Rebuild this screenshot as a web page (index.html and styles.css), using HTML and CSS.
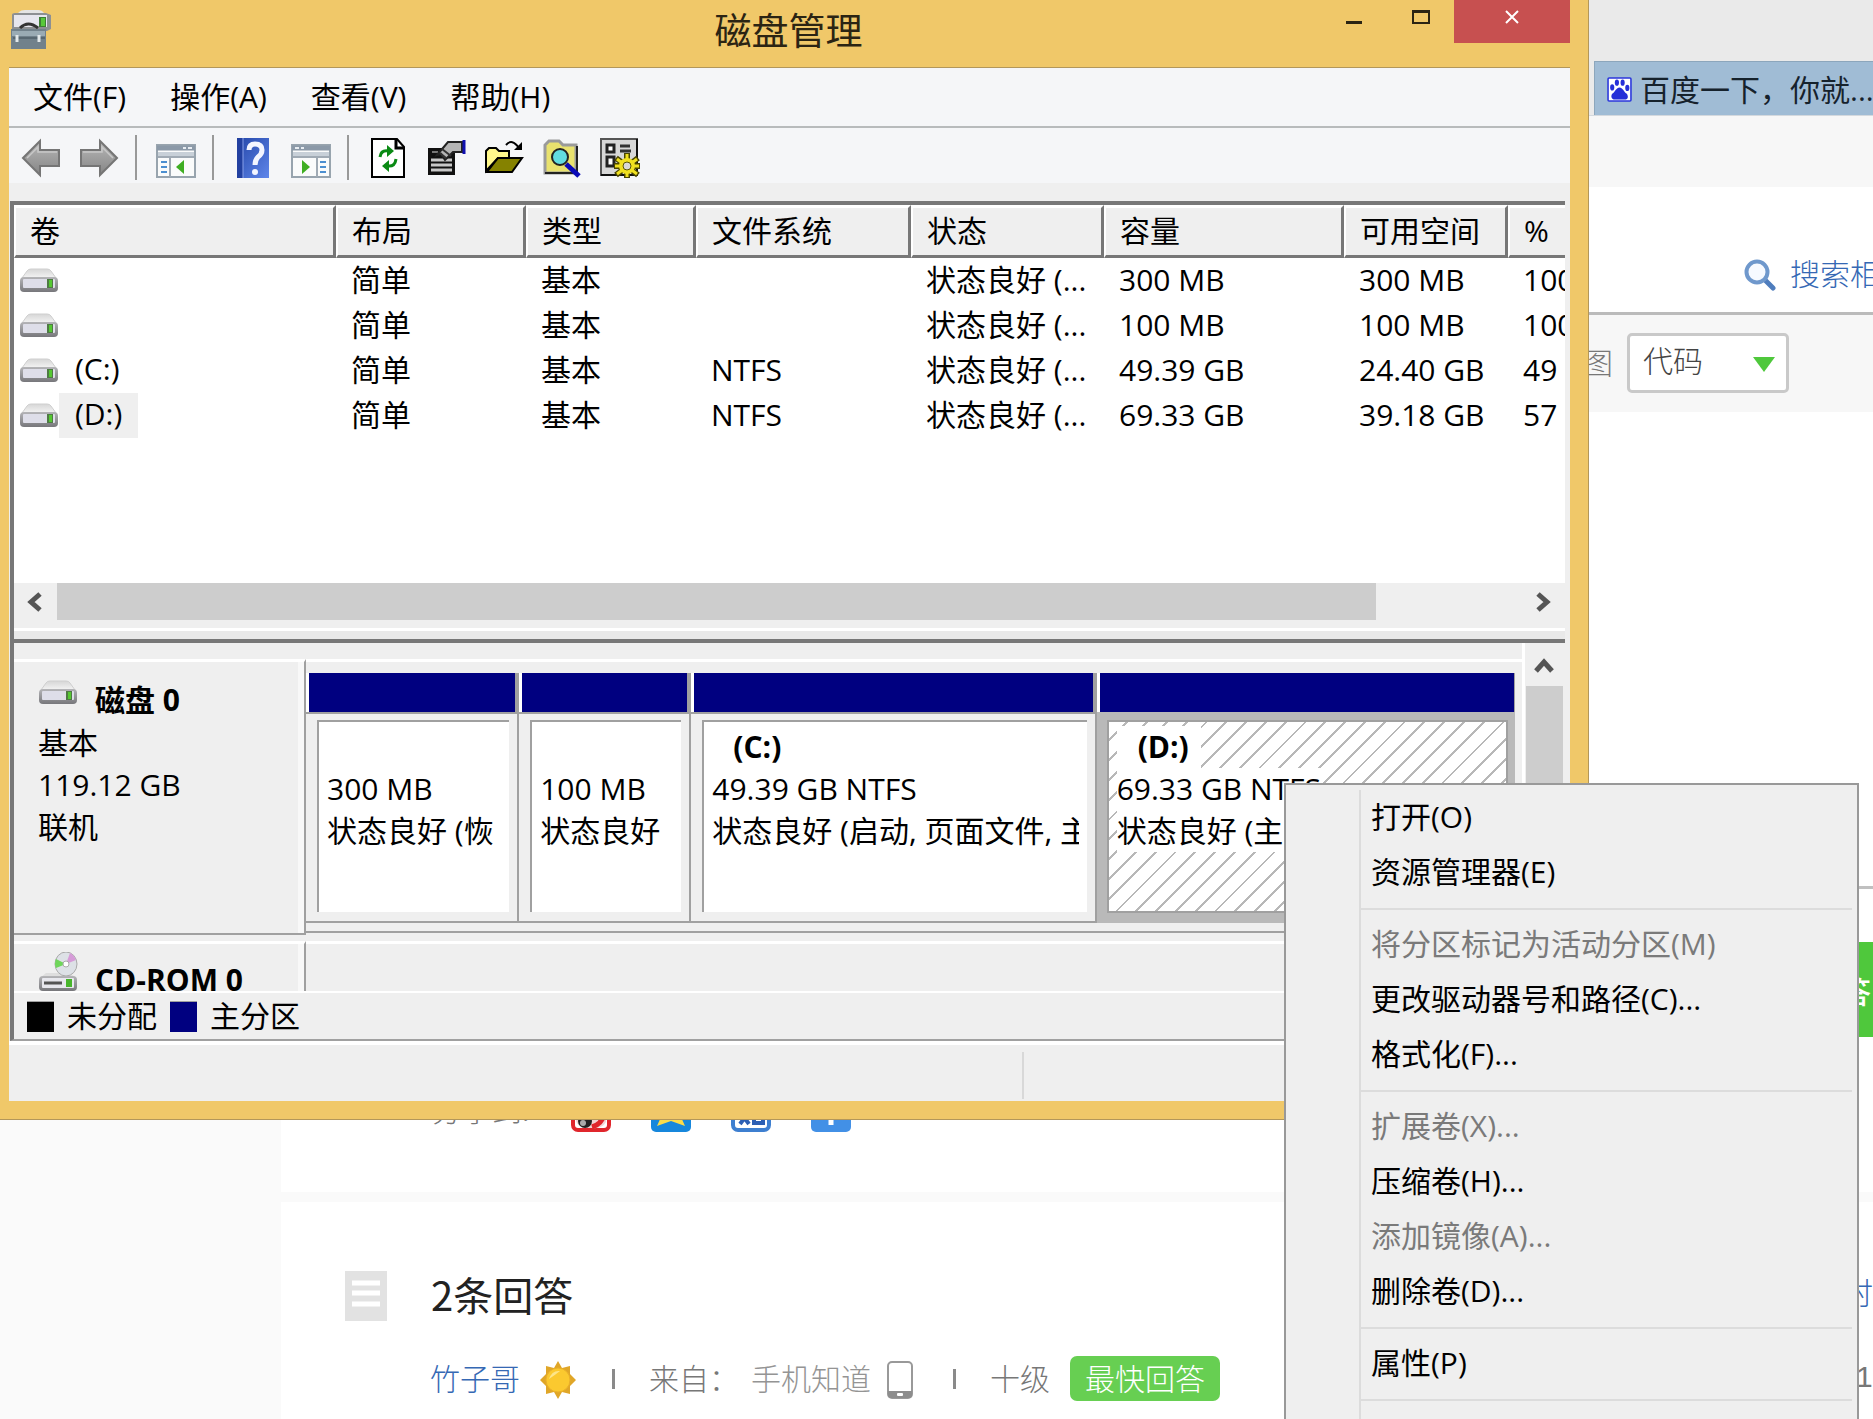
FILE: index.html
```html
<!DOCTYPE html>
<html lang="zh-CN">
<head>
    <meta charset="UTF-8">
    <meta name="viewport" content="width=device-width, initial-scale=1.0">
    <title>磁盘管理</title>
    <link rel="stylesheet" href="styles.css">
</head>
<body>
    <svg class="sprite" aria-hidden="true">
        <defs>
            <linearGradient id="driveTop" x1="0" y1="0" x2="0" y2="1">
                <stop offset="0" stop-color="#d6d6d6"/>
                <stop offset="1" stop-color="#f4f4f4"/>
            </linearGradient>
            <linearGradient id="driveEdge" x1="0" y1="0" x2="0" y2="1">
                <stop offset="0" stop-color="#b5b5b8"/>
                <stop offset="1" stop-color="#77777b"/>
            </linearGradient>
            <linearGradient id="helpBlue" x1="0" y1="0" x2="1" y2="1">
                <stop offset="0" stop-color="#2446a8"/>
                <stop offset="1" stop-color="#5f86ea"/>
            </linearGradient>
            <linearGradient id="arrowGray" x1="0" y1="0" x2="0" y2="1">
                <stop offset="0" stop-color="#b8b8b8"/>
                <stop offset="1" stop-color="#858585"/>
            </linearGradient>
            <symbol id="drive" viewBox="0 0 40 26">
                <path d="M8 3Q9 1 12 1H28Q31 1 32 3L37 10H3Z" fill="url(#driveTop)" stroke="#cfcfcf"/>
                <rect x="1" y="9" width="38" height="15" rx="4" fill="url(#driveEdge)"/>
                <rect x="4" y="11" width="32" height="9" rx="1" fill="#dedee9"/>
                <rect x="28" y="11" width="6" height="9" fill="#4f7a45"/>
                <rect x="30" y="12" width="3" height="7" fill="#55c832"/>
            </symbol>
            <symbol id="pane" viewBox="0 0 40 34">
                <rect x="1" y="1" width="38" height="32" fill="#fafbfb" stroke="#98a4ae" stroke-width="2"/>
                <path d="M1 4H39" stroke="#8b99a8" stroke-width="5"/>
                <path d="M27 4h3M32 4h4" stroke="#e8edf2" stroke-width="2"/>
                <path d="M2 10H38" stroke="#c8d0d8" stroke-width="4"/>
                <path d="M2 13H38M14 13V33" stroke="#a0aab4" stroke-width="2"/>
                <path d="M5 18h6M5 23h6M5 28h6" stroke="#4c8fd0" stroke-width="2"/>
            </symbol>
        </defs>
    </svg>

    <!-- browser page behind the window -->
    <div class="page">
        <div class="browser-top"></div>
        <div class="tab-row">
            <a href="#" class="tab">
                <svg class="paw" viewBox="0 0 24 24" aria-hidden="true">
                    <rect x="1" y="1" width="22" height="22" rx="1" fill="#fff" stroke="#2b36dc" stroke-width="1.5"/>
                    <g fill="#2530d8">
                        <ellipse cx="5" cy="10" rx="2" ry="3"/>
                        <ellipse cx="9.500" cy="5.500" rx="2" ry="3"/>
                        <ellipse cx="15" cy="5.500" rx="2" ry="3"/>
                        <ellipse cx="19.500" cy="10.500" rx="2" ry="3"/>
                        <path d="M12 10C9 10 8 14 5 16C3 19 5 22 8 21.500H16.500C20 22 21 19 19 16C16 14 15 10 12 10Z"/>
                    </g>
                </svg>
                <span>百度一下，你就...</span>
            </a>
        </div>
        <div class="band"></div>
        <div class="search-row">
            <a href="#" class="search-link">
                <svg class="search-icon" viewBox="0 0 32 32" aria-hidden="true">
                    <path d="M21 21L29 29" stroke="#4f7dbd" stroke-width="5" stroke-linecap="round"/>
                    <circle cx="13" cy="13" r="10.500" fill="#f7faff" stroke="#6f98cc" stroke-width="4"/>
                </svg>
                <span>搜索相关</span>
            </a>
        </div>
        <div class="tool-row">
            <label for="codeType">图</label>
            <div class="select-box">
                <select id="codeType">
                    <option>代码</option>
                </select>
            </div>
        </div>
        <div class="main">
            <div class="sidebar"></div>
            <div class="content">
                <div class="question">
                    <div class="rule"></div>
                    <button class="answer-btn" type="button">回答</button>
                    <div class="share">
                        <span>分享到:</span>
                        <svg viewBox="0 0 40 40" aria-hidden="true">
                            <rect x="2" y="2" width="36" height="36" rx="5" fill="#fff" stroke="#e0262c" stroke-width="4"/>
                            <path d="M5 20h30v10q-4 7-14 6Q6 36 5 28Z" fill="#f2d5d5"/>
                            <circle cx="14" cy="29" r="7" fill="#222"/>
                            <circle cx="12" cy="31" r="3" fill="#aaa"/>
                            <path d="M33 22Q31 32 21 35" fill="none" stroke="#e0262c" stroke-width="5"/>
                        </svg>
                        <svg viewBox="0 0 40 40" aria-hidden="true">
                            <rect width="40" height="40" rx="5" fill="#1687dc"/>
                            <path d="M20 4L25 15L36 16L30 25L34 34L20 29L6 34L10 25L4 16L15 15Z" fill="#fbdc4a"/>
                        </svg>
                        <svg viewBox="0 0 40 40" aria-hidden="true">
                            <rect x="2" y="2" width="36" height="36" rx="5" fill="#fff" stroke="#3e7fd0" stroke-width="4"/>
                            <path d="M9 20L18 32M18 20L9 32M23 18V31H32V24H23" fill="none" stroke="#2c5fb4" stroke-width="4"/>
                        </svg>
                        <svg viewBox="0 0 40 40" aria-hidden="true">
                            <rect width="40" height="40" rx="5" fill="#4290e6"/>
                            <path d="M20 8V33M10 18H30" stroke="#fff" stroke-width="5"/>
                        </svg>
                    </div>
                </div>
                <div class="answers">
                    <div class="answers-head">
                        <svg class="doc-icon" viewBox="0 0 42 50" aria-hidden="true">
                            <rect width="42" height="50" fill="#e2e2e2"/>
                            <path d="M7 12H35M7 22H35M7 33H35" stroke="#fff" stroke-width="5"/>
                        </svg>
                        <h2>2条回答</h2>
                        <a href="#" class="edge sort">时间</a>
                    </div>
                    <div class="answer-meta">
                        <a href="#" class="user">竹子哥</a>
                        <svg class="sun" viewBox="0 0 36 38" aria-hidden="true">
                            <path d="M18 0L22 7L30 5L30 13L36 19L30 25L30 33L22 31L18 38L14 31L6 33L6 25L0 19L6 13L6 5L14 7Z" fill="#e0a628"/>
                            <circle cx="18" cy="19" r="12" fill="#fbc92f" stroke="#eab02a"/>
                            <path d="M9 18Q12 9 20 10Q15 14 9 18Z" fill="#fde58a"/>
                        </svg>
                        <span class="bar"></span>
                        <span class="from">来自：</span>
                        <span class="source">手机知道</span>
                        <svg class="phone" viewBox="0 0 26 38" aria-hidden="true">
                            <rect x="1" y="1" width="24" height="36" rx="4" fill="#fff" stroke="#999" stroke-width="2"/>
                            <path d="M1 30H25V34Q25 37 22 37H4Q1 37 1 34Z" fill="#8d8d8d"/>
                            <rect x="10" y="32" width="6" height="3" rx="1" fill="#fff"/>
                        </svg>
                        <span class="bar"></span>
                        <span class="level">十级</span>
                        <span class="badge">最快回答</span>
                        <span class="edge date">1</span>
                    </div>
                </div>
            </div>
        </div>
    </div>

    <!-- disk management window -->
    <div class="window">
        <div class="titlebar">
            <svg class="app-icon" viewBox="0 0 40 40" aria-hidden="true">
                <path d="M8 3Q10 1 14 1H27Q31 1 33 4L37 8H4Z" fill="#e4e4e4"/>
                <path d="M1 6Q1 4 4 4H35L40 6V20L36 22H1Z" fill="#8d9093"/>
                <rect x="3" y="6" width="33" height="12" fill="#e6e6ee"/>
                <rect x="28" y="8" width="7" height="10" fill="#3e7d35"/>
                <rect x="30" y="9" width="4" height="8" fill="#58c83a"/>
                <path d="M9 19Q17 11 27 19" fill="none" stroke="#333" stroke-width="3"/>
                <path d="M0 20H35V40H0Z" fill="#71818b"/>
                <path d="M1 22H34V27H1Z" fill="#9aabb4"/>
                <path d="M2 29H34" stroke="#586872" stroke-width="2"/>
                <path d="M6 26V33M28 26V33" stroke="#e2e8ea" stroke-width="3"/>
            </svg>
            <h1>磁盘管理</h1>
            <div class="controls">
                <button type="button" aria-label="最小化">
                    <svg viewBox="0 0 18 14"><path d="M1 12.500H17" stroke="#2b2413" stroke-width="3"/></svg>
                </button>
                <button type="button" aria-label="最大化">
                    <svg viewBox="0 0 18 14"><path d="M1 1H17V13H1Z" fill="none" stroke="#2b2413" stroke-width="2"/><path d="M0 1.500H18" stroke="#2b2413" stroke-width="3"/></svg>
                </button>
                <button type="button" class="close" aria-label="关闭">
                    <svg viewBox="0 0 18 14"><path d="M3 1L15 13M15 1L3 13" stroke="#fff" stroke-width="2"/></svg>
                </button>
            </div>
        </div>

        <div class="client">
            <div class="menubar">
                <button type="button">文件(F)</button>
                <button type="button">操作(A)</button>
                <button type="button">查看(V)</button>
                <button type="button">帮助(H)</button>
            </div>

            <div class="toolbar">
                <button type="button" aria-label="后退">
                    <svg viewBox="0 0 40 40"><path d="M2 20L19 3V12H38V28H19V37Z" fill="url(#arrowGray)" stroke="#757575" stroke-width="2"/><path d="M6 20L17 9V14H36" fill="none" stroke="#c8c8c8" stroke-width="1.500"/></svg>
                </button>
                <button type="button" aria-label="前进">
                    <svg viewBox="0 0 40 40"><path d="M38 20L21 3V12H2V28H21V37Z" fill="url(#arrowGray)" stroke="#757575" stroke-width="2"/><path d="M4 14H23V9L34 20" fill="none" stroke="#c8c8c8" stroke-width="1.500"/></svg>
                </button>
                <span class="sep"></span>
                <button type="button" aria-label="显示/隐藏控制台树">
                    <svg viewBox="0 0 40 40"><use href="#pane" y="6" width="40" height="34"/><path d="M28 22V36L20 29Z" fill="#3fae22"/></svg>
                </button>
                <span class="sep"></span>
                <button type="button" aria-label="帮助">
                    <svg viewBox="0 0 40 40"><rect x="4" width="32" height="40" fill="url(#helpBlue)"/><path d="M4 0H10V40H4Z" fill="#2240a0"/><path d="M10 0V40" stroke="#88a0ea"/><path d="M16 12Q16 6 22 6Q29 6 29 12Q29 16 25 19Q22 22 22 27" fill="none" stroke="#f3f5ff" stroke-width="5"/><circle cx="22" cy="34" r="3" fill="#f3f5ff"/></svg>
                </button>
                <button type="button" aria-label="显示/隐藏操作窗格">
                    <svg viewBox="0 0 40 40"><use href="#pane" y="6" width="40" height="34" transform="matrix(-1 0 0 1 40 0)"/><path d="M11 22V36L19 29Z" fill="#3fae22"/></svg>
                </button>
                <span class="sep"></span>
                <button type="button" aria-label="刷新">
                    <svg viewBox="0 0 40 40"><path d="M4 1H29L36 9V39H4Z" fill="#fff" stroke="#000" stroke-width="2"/><path d="M28 1V10H36" fill="none" stroke="#000" stroke-width="3"/><path d="M12 19Q13 12 20 13M28 21Q27 29 20 28" fill="none" stroke="#0a8a14" stroke-width="3"/><path d="M19 7L26 13L19 19ZM21 22L14 28L21 34Z" fill="#0a8a14"/></svg>
                </button>
                <button type="button" aria-label="属性">
                    <svg viewBox="0 0 40 40"><path d="M2 10H29V37H2Z" fill="#111"/><path d="M5 22H26M5 27H26M5 32H26" stroke="#c8c8c8" stroke-width="3"/><path d="M6 14H12" stroke="#777" stroke-width="2"/><path d="M11 17L22 4H36V14H27L19 22L15 16Z" fill="#b5b5b5" stroke="#222" stroke-width="2"/><path d="M16 11L25 18M14 15L20 20" stroke="#333" stroke-width="2"/><path d="M38 2V16" stroke="#1010b0" stroke-width="3"/></svg>
                </button>
                <button type="button" aria-label="打开">
                    <svg viewBox="0 0 40 40"><path d="M2 33V13L5 10H12L15 13H25V20H14Z" fill="#fff88c" stroke="#000" stroke-width="2"/><path d="M3 34L14 20H38L28 34Z" fill="#858200" stroke="#000" stroke-width="2"/><path d="M22 7Q28 0 35 10" fill="none" stroke="#000" stroke-width="2"/><path d="M38 4V12H30Z" fill="#000"/></svg>
                </button>
                <button type="button" aria-label="查找">
                    <svg viewBox="0 0 40 40"><path d="M3 35V7L7 3H17L21 7H34V35Z" fill="#e9e26e" stroke="#9a9a9a" stroke-width="3"/><path d="M3 35H35V8" fill="none" stroke="#222" stroke-width="2"/><path d="M24 26L37 38" stroke="#0a0ab8" stroke-width="5"/><circle cx="18" cy="19" r="8" fill="#62dce0" stroke="#222" stroke-width="2"/></svg>
                </button>
                <button type="button" aria-label="设置">
                    <svg viewBox="0 0 40 40"><path d="M1 1H37V37H1Z" fill="#d8d8d8" stroke="#555" stroke-width="2"/><path d="M37 1V37H1" fill="none" stroke="#111" stroke-width="2"/><path d="M7 7H14V14H7ZM7 19H14V28H7Z" fill="#fff" stroke="#222" stroke-width="3"/><path d="M20 8H30M20 13H31" stroke="#333" stroke-width="3"/><path d="M27 15V40M16 20L38 37M38 20L16 37M14 28H40" stroke="#4a4600" stroke-width="6"/><path d="M27 16V39M17 21L37 36M37 21L17 36M15 28H39" stroke="#f0e020" stroke-width="3"/><circle cx="27" cy="28" r="8" fill="#f0e020"/><circle cx="27" cy="28" r="4" fill="#d8d8d8" stroke="#5a5600"/></svg>
                </button>
            </div>

            <div class="panes">
                <div class="volume-list">
                    <table>
                        <colgroup>
                            <col class="c-volume"><col class="c-layout"><col class="c-type"><col class="c-fs">
                            <col class="c-status"><col class="c-size"><col class="c-free"><col>
                        </colgroup>
                        <thead>
                            <tr><th>卷</th><th>布局</th><th>类型</th><th>文件系统</th><th>状态</th><th>容量</th><th>可用空间</th><th>%</th></tr>
                        </thead>
                        <tbody>
                            <tr><td><svg class="drive"><use href="#drive"/></svg></td><td>简单</td><td>基本</td><td></td><td>状态良好 (...</td><td>300 MB</td><td>300 MB</td><td>100 %</td></tr>
                            <tr><td><svg class="drive"><use href="#drive"/></svg></td><td>简单</td><td>基本</td><td></td><td>状态良好 (...</td><td>100 MB</td><td>100 MB</td><td>100 %</td></tr>
                            <tr><td><svg class="drive"><use href="#drive"/></svg><span class="name">(C:)</span></td><td>简单</td><td>基本</td><td>NTFS</td><td>状态良好 (...</td><td>49.39 GB</td><td>24.40 GB</td><td>49 %</td></tr>
                            <tr><td><svg class="drive"><use href="#drive"/></svg><span class="name selected">(D:)</span></td><td>简单</td><td>基本</td><td>NTFS</td><td>状态良好 (...</td><td>69.33 GB</td><td>39.18 GB</td><td>57 %</td></tr>
                        </tbody>
                    </table>
                </div>
                <div class="hscroll">
                    <button type="button" aria-label="向左滚动"><svg viewBox="0 0 18 20"><path d="M14 2L5 10L14 18" fill="none" stroke="#555" stroke-width="5"/></svg></button>
                    <div class="track"><div class="thumb"></div></div>
                    <button type="button" aria-label="向右滚动"><svg viewBox="0 0 18 20"><path d="M4 2L13 10L4 18" fill="none" stroke="#555" stroke-width="5"/></svg></button>
                </div>
                <div class="splitter"></div>

                <div class="disk-view">
                    <div class="disks">
                        <div class="disk">
                            <div class="disk-label">
                                <div class="disk-name"><svg class="drive"><use href="#drive"/></svg><b>磁盘 0</b></div>
                                <p>基本</p>
                                <p>119.12 GB</p>
                                <p>联机</p>
                            </div>
                            <div class="partitions">
                                <div class="part">
                                    <div class="part-bar"></div>
                                    <div class="part-body"><div class="part-info"><b></b><span>300 MB</span><span>状态良好 (恢</span></div></div>
                                </div>
                                <div class="part">
                                    <div class="part-bar"></div>
                                    <div class="part-body"><div class="part-info"><b></b><span>100 MB</span><span>状态良好</span></div></div>
                                </div>
                                <div class="part">
                                    <div class="part-bar"></div>
                                    <div class="part-body"><div class="part-info"><b>(C:)</b><span>49.39 GB NTFS</span><span>状态良好 (启动, 页面文件, 主</span></div></div>
                                </div>
                                <div class="part active">
                                    <div class="part-bar"></div>
                                    <div class="part-body"><div class="part-info"><b>(D:)</b><span>69.33 GB NTFS</span><span>状态良好 (主分区)</span></div></div>
                                </div>
                            </div>
                        </div>
                        <div class="disk cdrom">
                            <div class="disk-label">
                                <div class="disk-name">
                                    <svg class="cd" viewBox="0 0 40 40" aria-hidden="true">
                                        <path d="M8 21H32L38 26H2Z" fill="#dedede"/>
                                        <ellipse cx="28" cy="12" rx="11" ry="12" fill="#dde1e6" stroke="#a9a9a9"/>
                                        <path d="M28 12L32 1Q36 3 38 8Z" fill="#d69bd8"/>
                                        <path d="M28 12L18 7Q16 12 18 16Z" fill="#6fd65a"/>
                                        <circle cx="28" cy="12" r="3" fill="#fff" stroke="#aaa"/>
                                        <rect x="1" y="24" width="38" height="15" rx="4" fill="url(#driveEdge)"/>
                                        <rect x="4" y="26" width="32" height="10" rx="1" fill="#e8e8ee"/>
                                        <path d="M6 31H24" stroke="#555" stroke-width="3"/>
                                        <rect x="28" y="27" width="6" height="8" fill="#48b52c"/>
                                    </svg>
                                    <b>CD-ROM 0</b>
                                </div>
                            </div>
                            <div class="partitions"></div>
                        </div>
                    </div>
                    <div class="vscroll">
                        <button type="button" aria-label="向上滚动"><svg viewBox="0 0 20 18"><path d="M2 15L10 6L18 15" fill="none" stroke="#555" stroke-width="5"/></svg></button>
                        <div class="vthumb"></div>
                    </div>
                </div>
                <div class="legend">
                    <span class="swatch unallocated"></span><span>未分配</span>
                    <span class="swatch primary"></span><span>主分区</span>
                </div>
            </div>
            <div class="statusbar"><span class="status-main"></span></div>
        </div>
    </div>

    <!-- partition context menu -->
    <div class="context-menu">
        <div class="menu-items">
            <button type="button">打开(O)</button>
            <button type="button">资源管理器(E)</button>
            <hr>
            <button type="button" disabled>将分区标记为活动分区(M)</button>
            <button type="button">更改驱动器号和路径(C)...</button>
            <button type="button">格式化(F)...</button>
            <hr>
            <button type="button" disabled>扩展卷(X)...</button>
            <button type="button">压缩卷(H)...</button>
            <button type="button" disabled>添加镜像(A)...</button>
            <button type="button">删除卷(D)...</button>
            <hr>
            <button type="button">属性(P)</button>
            <hr>
        </div>
    </div>
</body>
</html>
```
FILE: styles.css
```css
:root {
    --frame: #f0c869;
    --face: #efefef;
    --shadow: #a0a0a0;
    --dark: #777777;
    --navy: #000080;
    --link: #3568b4;
    --green: #4fc83c;
}

* {
    box-sizing: border-box;
}

body {
    position: relative;
    margin: 0;
    height: 100vh;
    overflow: hidden;
    background: #fff;
    color: #000;
    font-family: "Open Sans", "Noto Sans CJK SC", sans-serif;
    font-size: 30px;
    line-height: 42px;
}

button,
select {
    margin: 0;
    padding: 0;
    border: none;
    background: none;
    color: inherit;
    font: inherit;
}

a {
    color: var(--link);
    text-decoration: none;
}

p,
h1,
h2 {
    margin: 0;
    font-weight: normal;
}

svg {
    display: block;
    flex: none;
}

.sprite {
    position: absolute;
    width: 0;
    height: 0;
}

/* browser page */
.page {
    display: flex;
    flex-direction: column;
    min-height: 100%;
    font-family: "Noto Sans CJK SC", sans-serif;
    font-weight: 300;
}

.browser-top {
    height: 61px;
    background: #eaeaea;
}

.tab-row {
    display: flex;
    justify-content: flex-end;
    height: 55px;
    background: #eaeaea;
    border-bottom: 1px solid #d4d9de;
}

.tab {
    display: flex;
    align-items: center;
    gap: 8px;
    width: 279px;
    padding-left: 12px;
    padding-top: 2px;
    border: 1px solid #8ca6bc;
    border-width: 1px 0 0 1px;
    background: #a0bcd5;
    color: #16222c;
    font-family: "Open Sans", "Noto Sans CJK SC", sans-serif;
    font-weight: normal;
    white-space: nowrap;
}

.paw {
    width: 25px;
    height: 25px;
}

.band {
    height: 71px;
    background: #f7f7f7;
}

.search-row {
    display: flex;
    justify-content: flex-end;
    height: 128px;
    padding-top: 64px;
    border-bottom: 3px solid #bbb;
}

.search-link {
    display: flex;
    gap: 14px;
    width: 129px;
    white-space: nowrap;
}

.search-icon {
    width: 32px;
    height: 32px;
    margin-top: 8px;
}

.tool-row {
    display: flex;
    justify-content: flex-end;
    align-items: center;
    gap: 14px;
    height: 97px;
    padding: 0 84px 2px 0;
    background: #f7f7f7;
    color: #777;
}

.tool-row label {
    padding-bottom: 4px;
}

.select-box {
    position: relative;
    width: 162px;
}

.select-box select {
    appearance: none;
    width: 100%;
    height: 60px;
    padding: 0 13px 8px;
    border: 3px solid #c9c9c9;
    border-radius: 5px;
    background: #fff;
    color: #444;
}

.select-box::after {
    content: "";
    position: absolute;
    top: 24px;
    right: 14px;
    border: 11px solid transparent;
    border-top: 15px solid var(--green);
    border-bottom: none;
}

.main {
    display: flex;
    flex: 1;
}

.sidebar {
    width: 281px;
    background: #fafafa;
}

.content {
    display: flex;
    flex-direction: column;
    flex: 1;
    gap: 10px;
    min-width: 0;
    background: #fafafa;
}

.question {
    display: flex;
    flex-direction: column;
    align-items: flex-end;
    height: 780px;
    padding: 474px 0 60px;
    background: #fff;
}

.rule {
    width: 100%;
    height: 3px;
    background: #c0c0c0;
}

.answer-btn {
    width: 90px;
    height: 95px;
    margin-top: 53px;
    padding-left: 28px;
    overflow: hidden;
    background: var(--green);
    color: #fff;
    font-weight: 500;
    text-align: left;
    white-space: nowrap;
}

.share {
    display: flex;
    align-self: stretch;
    gap: 40px;
    height: 40px;
    margin-top: auto;
    padding-left: 151px;
    color: #777;
}

.share span {
    width: 99px;
    line-height: 32px;
}

.share svg {
    width: 40px;
    height: 40px;
}

.answers {
    flex: 1;
    padding: 68px 0 0 64px;
    background: #fff;
}

.answers-head {
    display: flex;
    gap: 44px;
    height: 52px;
}

.answers-head h2 {
    color: #222;
    font-size: 40px;
    line-height: 48px;
}

.doc-icon {
    width: 42px;
    height: 50px;
    margin-top: 1px;
}

.edge {
    margin-left: auto;
    overflow: hidden;
    white-space: nowrap;
}

.sort {
    width: 30px;
}

.date {
    width: 17px;
    font-family: "Liberation Sans", sans-serif;
}

.answer-meta {
    display: flex;
    height: 46px;
    margin-top: 34px;
    padding-left: 85px;
    color: #777;
}

.sun {
    width: 36px;
    height: 38px;
    margin: 5px 0 0 20px;
}

.bar {
    width: 3px;
    height: 20px;
    margin: 13px 34px 0 36px;
    background: #8a8a8a;
}

.from {
    margin-right: 12px;
}

.source {
    color: #949494;
}

.phone {
    width: 26px;
    height: 38px;
    margin: 5px 0 0 16px;
}

.phone + .bar {
    margin-left: 40px;
}

.badge {
    height: 45px;
    margin-left: 20px;
    padding: 0 15px;
    border-radius: 7px;
    background: #67cf52;
    color: #fff;
}

/* window frame */
.window {
    position: absolute;
    top: 0;
    left: 0;
    right: 284px;
    padding: 0 18px 18px 9px;
    background: var(--frame);
    border-right: 1px solid #b3975a;
    border-bottom: 1px solid #b3975a;
}

.titlebar {
    display: flex;
    justify-content: space-between;
    height: 67px;
}

.titlebar h1 {
    flex: 1;
    padding-left: 206px;
    color: #2b2413;
    font-size: 37px;
    line-height: 62px;
    text-align: center;
}

.app-icon {
    width: 40px;
    height: 40px;
    margin: 9px 0 0 2px;
}

.controls {
    display: flex;
}

.controls button {
    display: flex;
    justify-content: center;
    width: 67px;
    height: 43px;
    padding-top: 10px;
}

.controls svg {
    width: 18px;
    height: 14px;
}

.controls .close {
    width: 116px;
    background: #c75050;
}

.client {
    border-top: 1px solid #b3975a;
    background: var(--face);
}

.menubar {
    display: flex;
    gap: 44px;
    height: 60px;
    padding: 0 24px;
    border-bottom: 2px solid #b8bbbc;
    background: #f5f6f8;
}

.toolbar {
    display: flex;
    align-items: center;
    gap: 18px;
    height: 55px;
    padding: 4px 12px 0;
    background: #f5f6f8;
}

.toolbar svg {
    width: 40px;
    height: 40px;
}

.sep {
    width: 2px;
    height: 45px;
    margin: 0 1px 0 -2px;
    background: #999;
}

/* volume list */
.panes {
    margin: 18px 5px 0 1px;
    border-top: 4px solid var(--dark);
    border-left: 4px solid var(--dark);
    border-bottom: 2px solid var(--shadow);
}

.volume-list {
    height: 378px;
    overflow: hidden;
    background: #fff;
}

.volume-list table {
    width: 100%;
    table-layout: fixed;
    border-collapse: separate;
    border-spacing: 0;
}

.c-volume { width: 322px; }
.c-layout { width: 190px; }
.c-type { width: 170px; }
.c-fs { width: 215px; }
.c-status { width: 193px; }
.c-size { width: 240px; }
.c-free { width: 164px; }

.volume-list th,
.volume-list td {
    height: 45px;
    padding: 0 0 2px 15px;
    overflow: hidden;
    font-weight: normal;
    text-align: left;
    white-space: nowrap;
}

.volume-list th {
    height: 53px;
    padding-left: 14px;
    border-top: 3px solid #fff;
    border-left: 2px solid #fff;
    border-right: 3px solid var(--dark);
    border-bottom: 3px solid var(--dark);
    background: var(--face);
}

.volume-list th:last-child {
    border-right: none;
}

.volume-list td:first-child {
    display: flex;
    align-items: center;
    padding: 0 0 0 5px;
}

.drive {
    width: 40px;
    height: 26px;
}

.name {
    height: 45px;
    padding: 0 16px;
}

.selected {
    background: var(--face);
}

.hscroll {
    display: flex;
    height: 37px;
}

.hscroll button {
    width: 43px;
    padding-left: 12px;
}

.hscroll svg {
    width: 18px;
    height: 20px;
}

.track {
    flex: 1;
}

.thumb {
    width: 90%;
    height: 37px;
    background: #cdcdcd;
}

.splitter {
    height: 23px;
    border-bottom: 4px solid var(--dark);
    background: linear-gradient(var(--face) 8px, #fff 8px, #fff 11px, #e9e9e9 11px);
}

/* graphical disk view */
.disk-view {
    display: flex;
    height: 348px;
    overflow: hidden;
}

.disks {
    flex: 1;
    padding-top: 16px;
    border-right: 3px solid #fff;
}

.disk {
    display: flex;
    height: 276px;
    margin-bottom: 6px;
}

.disk-label {
    width: 292px;
    padding: 18px 0 0 24px;
    border-top: 3px solid #fff;
    border-right: 2px solid var(--shadow);
    border-bottom: 2px solid var(--shadow);
    box-shadow: inset -6px 0 #f8f8f8;
}

.disk-name {
    display: flex;
    gap: 17px;
}

.disk-name b {
    height: 42px;
    line-height: 40px;
    white-space: nowrap;
}

.partitions {
    display: grid;
    grid-template-columns: 213fr 172fr 405fr 418fr;
    flex: 1;
    min-width: 0;
    height: 274px;
    padding: 11px 7px 0 0;
    border-top: 3px solid #fff;
    border-bottom: 2px solid var(--shadow);
}

.part {
    display: flex;
    flex-direction: column;
    min-width: 0;
    height: 250px;
}

.part-bar {
    height: 39px;
    border-left: 3px solid #fff;
    border-right: 4px solid var(--shadow);
    background: var(--navy);
}

.active .part-bar {
    border-right-width: 1px;
}

.part-body {
    flex: 1;
    min-height: 0;
    padding: 6px 8px 9px 11px;
    border: 2px solid var(--shadow);
    border-left: none;
}

.part-info {
    height: 100%;
    padding: 4px 8px 0;
    overflow: hidden;
    border-top: 2px solid var(--shadow);
    border-left: 2px solid var(--shadow);
    background: #fff;
    white-space: nowrap;
}

.part-info b,
.part-info span {
    display: block;
    width: fit-content;
    max-width: 100%;
    min-height: 42px;
    overflow: hidden;
}

.part-info b {
    padding: 0 12px 0 21px;
}

.active .part-body {
    padding: 6px 5px 8px 10px;
    border-color: #b9b9b9;
    background: #b9b9b9;
}

.active .part-info {
    border: 2px solid var(--shadow);
    background: repeating-linear-gradient(135deg, #fff 0, #fff 12px, #b8b8b8 12px, #b8b8b8 14px);
}

.active b,
.active span {
    background: #fff;
}

.cdrom .disk-label {
    padding-top: 8px;
}

.cdrom .disk-name b {
    height: 56px;
    line-height: 56px;
}

.cd {
    width: 40px;
    height: 40px;
}

.vscroll {
    width: 40px;
}

.vscroll button {
    display: block;
    width: 38px;
    height: 43px;
}

.vscroll svg {
    width: 20px;
    height: 18px;
    margin: 0 auto;
}

.vthumb {
    width: 37px;
    height: 240px;
    margin-left: 1px;
    background: #cdcdcd;
}

.legend {
    display: flex;
    align-items: center;
    gap: 13px;
    height: 48px;
    padding-left: 13px;
    border-top: 2px solid #fff;
}

.swatch {
    width: 27px;
    height: 31px;
    border-top: 1px solid var(--shadow);
}

.unallocated {
    background: #000;
}

.primary {
    background: var(--navy);
}

.statusbar {
    height: 60px;
    padding-top: 7px;
    border-top: 4px solid #fff;
}

.status-main {
    display: block;
    width: 65%;
    height: 47px;
    border-right: 2px solid #d8d8d8;
}

/* context menu */
.context-menu {
    position: absolute;
    top: 783px;
    right: 14px;
    width: 575px;
    height: 700px;
    padding: 5px;
    border: 2px solid #999;
    background: var(--face);
}

.menu-items {
    display: flex;
    flex-direction: column;
    height: 100%;
    margin-left: 68px;
    border-left: 2px solid #dcdcdc;
}

.menu-items button {
    height: 55px;
    padding: 0 0 2px 10px;
    text-align: left;
}

.menu-items button:disabled {
    color: #7a7a7a;
}

.menu-items hr {
    width: 100%;
    height: 2px;
    margin: 8px 0 7px;
    border: none;
    background: #dcdcdc;
}
```
